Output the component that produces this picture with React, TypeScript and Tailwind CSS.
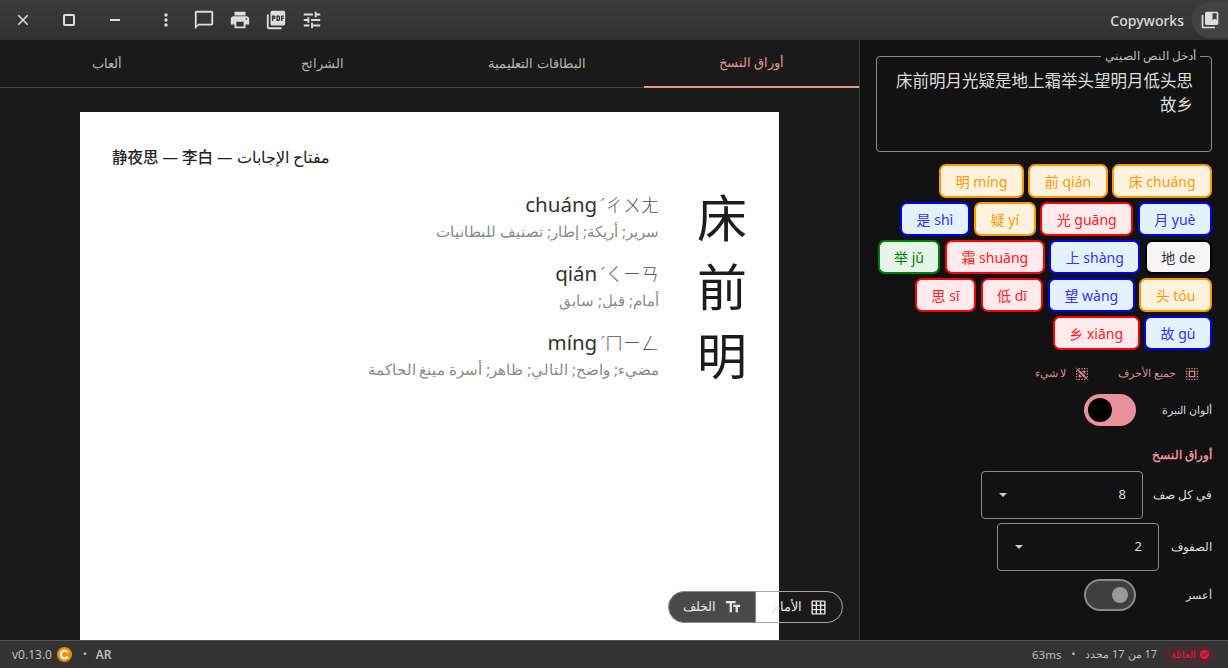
const font = '[font-family:"Noto_Sans","Noto_Sans_CJK_SC",sans-serif]'

const paths = {
  close: 'M19 6.41L17.59 5 12 10.59 6.41 5 5 6.41 10.59 12 5 17.59 6.41 19 12 13.41 17.59 19 19 17.59 13.41 12z',
  more: 'M12 8c1.1 0 2-.9 2-2s-.9-2-2-2-2 .9-2 2 .9 2 2 2zm0 2c-1.1 0-2 .9-2 2s.9 2 2 2 2-.9 2-2-.9-2-2-2zm0 6c-1.1 0-2 .9-2 2s.9 2 2 2 2-.9 2-2-.9-2-2-2z',
  chat: 'M20 2H4c-1.1 0-2 .9-2 2v18l4-4h14c1.1 0 2-.9 2-2V4c0-1.1-.9-2-2-2zm0 14H6l-2 2V4h16v12z',
  print: 'M19 8H5c-1.66 0-3 1.34-3 3v6h4v4h12v-4h4v-6c0-1.66-1.34-3-3-3zm-3 11H8v-5h8v5zm3-7c-.55 0-1-.45-1-1s.45-1 1-1 1 .45 1 1-.45 1-1 1zm-1-9H6v4h12V3z',
  pdf: 'M20 2H8c-1.1 0-2 .9-2 2v12c0 1.1.9 2 2 2h12c1.1 0 2-.9 2-2V4c0-1.1-.9-2-2-2zm-8.5 7.5c0 .83-.67 1.5-1.5 1.5H9v2H7.5V7H10c.83 0 1.5.67 1.5 1.5v1zm5 2c0 .83-.67 1.5-1.5 1.5h-2.5V7H15c.83 0 1.5.67 1.5 1.5v3zm4-3H19v1h1.5V11H19v2h-1.5V7h3v1.5zM9 9.5h1v-1H9v1zM4 6H2v14c0 1.1.9 2 2 2h14v-2H4V6zm10 5.5h1v-3h-1v3z',
  tune: 'M3 17v2h6v-2H3zM3 5v2h10V5H3zm10 16v-2h8v-2h-8v-2h-2v6h2zM7 9v2H3v2h4v2h2V9H7zm14 4v-2H11v2h10zm-6-4h2V7h4V5h-4V3h-2v6z',
  library: 'M4 6H2v14c0 1.1.9 2 2 2h14v-2H4V6zm16-4H8c-1.1 0-2 .9-2 2v12c0 1.1.9 2 2 2h12c1.1 0 2-.9 2-2V4c0-1.1-.9-2-2-2zm0 10l-2.5-1.5L15 12V4h5v8z',
  grid: 'M20 2H4c-1.1 0-2 .9-2 2v16c0 1.1.9 2 2 2h16c1.1 0 2-.9 2-2V4c0-1.1-.9-2-2-2zM8 20H4v-4h4v4zm0-6H4v-4h4v4zm0-6H4V4h4v4zm6 12h-4v-4h4v4zm0-6h-4v-4h4v4zm0-6h-4V4h4v4zm6 12h-4v-4h4v4zm0-6h-4v-4h4v4zm0-6h-4V4h4v4z',
  size: 'M2.5 4v3h5v12h3V7h5V4h-13zm19 5h-9v3h3v7h3v-7h3V9z',
  selectAll: 'M3 5h2V3c-1.1 0-2 .9-2 2zm0 8h2v-2H3v2zm4 8h2v-2H7v2zM3 9h2V7H3v2zm10-6h-2v2h2V3zm6 0v2h2c0-1.1-.9-2-2-2zM5 21v-2H3c0 1.1.9 2 2 2zm-2-4h2v-2H3v2zM9 3H7v2h2V3zm2 18h2v-2h-2v2zm8-8h2v-2h-2v2zm0 8c1.1 0 2-.9 2-2h-2v2zm0-12h2V7h-2v2zm0 8h2v-2h-2v2zm-4 4h2v-2h-2v2zm0-16h2V3h-2v2zM7 17h10V7H7v10zm2-8h6v6H9V9z',
  deselect: 'M3 5h2V3c-1.1 0-2 .9-2 2zm0 8h2v-2H3v2zm4 8h2v-2H7v2zM3 9h2V7H3v2zm10-6h-2v2h2V3zm6 0v2h2c0-1.1-.9-2-2-2zM5 21v-2H3c0 1.1.9 2 2 2zm-2-4h2v-2H3v2zM9 3H7v2h2V3zm2 18h2v-2h-2v2zm8-8h2v-2h-2v2zm0 8c1.1 0 2-.9 2-2h-2v2zm0-12h2V7h-2v2zm0 8h2v-2h-2v2zm-4 4h2v-2h-2v2zm0-16h2V3h-2v2zM7 7h2.5L17 14.5V17h-2.5L7 9.5V7zm0 4.5L12.5 17H7v-5.5zM11.5 7H17v5.5L11.5 7zM3.7 2.3l18 18-1.4 1.4-18-18z',
  check: 'M12 2C6.48 2 2 6.48 2 12s4.48 10 10 10 10-4.48 10-10S17.52 2 12 2zm-2 15l-5-5 1.41-1.41L10 14.17l7.59-7.59L19 8l-9 9z',
}

function Icon({ d, className = '' }: { d: string; className?: string }) {
  return (
    <svg viewBox="0 0 24 24" fill="currentColor" className={className}>
      <path d={d} />
    </svg>
  )
}

const tones = {
  orange: 'border-[#ff9800] bg-[#fff3e0] text-[#ff9800]',
  blue: 'border-[#0000ff] bg-[#e3f2fd] text-[#3333ff]',
  red: 'border-[#ff0000] bg-[#ffebee] text-[#ff2020]',
  green: 'border-[#008000] bg-[#e8f5e9] text-[#008000]',
  black: 'border-[#000000] bg-[#f5f5f5] text-[#333333]',
}

const tokens: [string, keyof typeof tones][] = [
  ['床 chuáng', 'orange'],
  ['前 qián', 'orange'],
  ['明 míng', 'orange'],
  ['月 yuè', 'blue'],
  ['光 guāng', 'red'],
  ['疑 yí', 'orange'],
  ['是 shì', 'blue'],
  ['地 de', 'black'],
  ['上 shàng', 'blue'],
  ['霜 shuāng', 'red'],
  ['举 jǔ', 'green'],
  ['头 tóu', 'orange'],
  ['望 wàng', 'blue'],
  ['低 dī', 'red'],
  ['思 sī', 'red'],
  ['故 gù', 'blue'],
  ['乡 xiāng', 'red'],
]

const words = [
  { han: '床', pinyin: 'chuáng', zhuyin: 'ˊㄔㄨㄤ', meaning: 'سرير; أريكة; إطار; تصنيف للبطانيات' },
  { han: '前', pinyin: 'qián', zhuyin: 'ˊㄑㄧㄢ', meaning: 'أمام; قبل; سابق' },
  { han: '明', pinyin: 'míng', zhuyin: 'ˊㄇㄧㄥ', meaning: 'مضيء; واضح; التالي; ظاهر; أسرة مينغ الحاكمة' },
]

function TopBar() {
  return (
    <header className="flex h-10 shrink-0 items-center bg-gradient-to-b from-[#3c3c3c] to-[#313131] text-[#dddddd]">
      <button className="flex h-10 w-[46px] items-center justify-center">
        <Icon d={paths.close} className="h-[18px] w-[18px]" />
      </button>
      <button className="flex h-10 w-[46px] items-center justify-center">
        <span className="h-3 w-3 rounded-[2px] border-2 border-[#dddddd]" />
      </button>
      <button className="flex h-10 w-[46px] items-center justify-center">
        <span className="h-[2px] w-[10px] bg-[#dddddd]" />
      </button>
      <button className="ml-[10px] flex h-10 w-9 items-center justify-center">
        <Icon d={paths.more} className="h-[20px] w-[20px]" />
      </button>
      <button className="ml-[2px] flex h-10 w-9 items-center justify-center">
        <Icon d={paths.chat} className="h-[22px] w-[22px]" />
      </button>
      <button className="flex h-10 w-9 items-center justify-center">
        <Icon d={paths.print} className="h-[22px] w-[22px]" />
      </button>
      <button className="flex h-10 w-9 items-center justify-center">
        <Icon d={paths.pdf} className="h-[22px] w-[22px]" />
      </button>
      <button className="flex h-10 w-9 items-center justify-center">
        <Icon d={paths.tune} className="h-[22px] w-[22px]" />
      </button>
      <span className="ml-auto text-[14px] font-medium text-[#dcdcdc]">Copyworks</span>
      <div className="ml-[8px] flex h-9 w-9 items-center justify-center rounded-l-full bg-[#424242]">
        <Icon d={paths.library} className="h-[20px] w-[20px]" />
      </div>
    </header>
  )
}

function Tabs() {
  const labels = ['أوراق النسخ', 'البطاقات التعليمية', 'الشرائح', 'ألعاب']
  return (
    <div dir="rtl" className="grid h-12 shrink-0 grid-cols-4 border-b border-[#474747]">
      {labels.map((label, i) => (
        <div
          key={label}
          className={`-mb-px flex items-center justify-center text-[13px] ${
            i === 0 ? 'border-b-2 border-[#e8919a] text-[#e8919a]' : 'text-[#b4b4b4]'
          }`}
        >
          {label}
        </div>
      ))}
    </div>
  )
}

function Sheet() {
  return (
    <div dir="rtl" className="mx-auto min-h-[528px] w-[699px] bg-white px-8 pt-[30px]">
      <h2 dir="ltr" className="text-left text-[15.5px] leading-[30px] font-medium text-[#222222]">
        静夜思 — 李白 — مفتاح الإجابات
      </h2>
      <div className="mt-[16px] flex flex-col gap-[9px]">
        {words.map((w) => (
          <div key={w.han} className="flex h-[60px] items-center gap-[38px]">
            <div className="w-[50px] text-center text-[50px] leading-[60px] text-[#1c1c1c]">{w.han}</div>
            <div className="-mt-[4px]">
              <div dir="ltr" className="text-right text-[20.5px] leading-[28px] text-[#333333]">
                {w.pinyin}
                <span className="ml-[3px] text-[18px] font-light text-[#555555]">{w.zhuyin}</span>
              </div>
              <div className="text-[15px] leading-[24px] text-[#8a8a8a]">{w.meaning}</div>
            </div>
          </div>
        ))}
      </div>
    </div>
  )
}

function FaceToggle() {
  return (
    <div dir="rtl" className="absolute right-4 bottom-[17px] flex h-8 w-[175px] text-[13px]">
      <div className="flex w-[88px] items-center justify-center gap-[8px] rounded-r-full border border-[#a8a8a8] text-[#e6e6e6]">
        <Icon d={paths.grid} className="h-[17px] w-[17px]" />
        <span>الأمام</span>
      </div>
      <div className="-mr-px flex flex-1 items-center justify-center gap-[8px] rounded-l-full border border-[#8a8a8a] bg-[#4a4a4a] text-[#e6e6e6]">
        <Icon d={paths.size} className="h-[18px] w-[18px]" />
        <span>الخلف</span>
      </div>
    </div>
  )
}

function Toggle({ label, on }: { label: string; on: boolean }) {
  return (
    <div className="flex items-center text-[11px] font-medium text-[#dddddd]">
      <span className="w-[76px]">{label}</span>
      {on ? (
        <span dir="ltr" className="flex h-8 w-[52px] items-center justify-start rounded-full bg-[#e8919a] pl-1">
          <span className="h-6 w-6 rounded-full bg-black" />
        </span>
      ) : (
        <span dir="ltr" className="flex h-8 w-[52px] items-center justify-end rounded-full border-2 border-[#8a8a8a] bg-[#3f3f3f] pr-[6px]">
          <span className="h-4 w-4 rounded-full bg-[#999999]" />
        </span>
      )}
    </div>
  )
}

function Select({ label, value, labelClass }: { label: string; value: string; labelClass: string }) {
  return (
    <div className="flex items-center gap-[13px] text-[11.5px] font-medium text-[#dddddd]">
      <span className={`whitespace-nowrap ${labelClass}`}>{label}</span>
      <div className="flex h-12 w-[162px] items-center justify-between rounded-[4px] border border-[#8a8a8a] pr-[16px] pl-[17px] text-[13px] font-normal">
        <span>{value}</span>
        <span className="h-0 w-0 border-x-[4px] border-t-[4px] border-x-transparent border-t-[#cccccc]" />
      </div>
    </div>
  )
}

function Sidebar() {
  return (
    <aside dir="rtl" className="flex w-[369px] shrink-0 flex-col border-l border-[#3a3a3a] bg-[#121212] px-4">
      <fieldset className="mt-[10px] h-[102px] rounded-[4px] border border-[#8a8a8a] px-[18px]">
        <legend className="-mr-[7px] px-[4px] text-[11.5px] leading-[12px] text-[#bbbbbb]">أدخل النص الصيني</legend>
        <p className="pt-[7px] text-[16.5px] leading-[24px] text-[#dddddd]">床前明月光疑是地上霜举头望明月低头思故乡</p>
      </fieldset>
      <div className="mt-[12px] flex flex-wrap gap-x-[4.5px] gap-y-[4px]">
        {tokens.map(([text, tone]) => (
          <span dir="ltr" key={text} className={`flex h-[34px] items-center rounded-[7px] border-2 px-[14.5px] text-[14px] whitespace-nowrap ${tones[tone]}`}>
            {text}
          </span>
        ))}
      </div>
      <div className="mt-[16px] flex h-[16px] items-center gap-[28px] pr-[12px] text-[10.5px] text-[#d98790]">
        <span className="flex items-center gap-[8px]">
          <Icon d={paths.selectAll} className="h-[16px] w-[16px]" />
          جميع الأحرف
        </span>
        <span className="flex items-center gap-[8px]">
          <Icon d={paths.deselect} className="h-[16px] w-[16px]" />
          لا شيء
        </span>
      </div>
      <div className="mt-[12px]">
        <Toggle label="ألوان النبرة" on />
      </div>
      <div className="mt-[20px] text-[11.5px] leading-[18px] font-semibold text-[#e8919a]">أوراق النسخ</div>
      <div className="mt-[7px] flex flex-col gap-[4px]">
        <Select label="في كل صف" value="8" labelClass="w-[56px]" />
        <Select label="الصفوف" value="2" labelClass="w-[40px]" />
      </div>
      <div className="mt-[8px]">
        <Toggle label="أعسر" on={false} />
      </div>
    </aside>
  )
}

function StatusBar() {
  return (
    <footer className="flex h-7 shrink-0 items-center border-t border-[#555555] bg-[#333333] px-3 text-[12px] text-[#bdbdbd]">
      <span>v0.13.0</span>
      <svg viewBox="0 0 16 16" className="ml-[5px] h-[15px] w-[15px]">
        <circle cx="8" cy="8" r="8" fill="#f28c00" />
        <path d="M11.5 5.8a4 4 0 1 0 0 4.4" fill="none" stroke="#ffffff" strokeWidth="2.4" />
      </svg>
      <span className="ml-[11px] text-[10px]">•</span>
      <span className="ml-[9px] font-semibold">AR</span>
      <span className="ml-auto text-[11.5px]">63ms</span>
      <span className="ml-[10px] text-[10px]">•</span>
      <span dir="rtl" className="ml-[10px] text-[11px]">17 من 17 محدد</span>
      <span dir="rtl" className="ml-[7px] flex h-[20px] w-[52px] items-center justify-center gap-[3px] rounded-full bg-[#4a2b33] text-[10px] text-[#e8173c]">
        <Icon d={paths.check} className="h-[11px] w-[11px]" />
        العائلة
      </span>
    </footer>
  )
}

export default function App() {
  return (
    <div className={`flex h-screen flex-col overflow-hidden bg-[#1a1a1a] ${font}`}>
      <TopBar />
      <div className="flex min-h-0 flex-1">
        <main className="relative flex min-w-0 flex-1 flex-col">
          <Tabs />
          <div className="min-h-0 flex-1 overflow-hidden pt-6">
            <Sheet />
          </div>
          <FaceToggle />
        </main>
        <Sidebar />
      </div>
      <StatusBar />
    </div>
  )
}
